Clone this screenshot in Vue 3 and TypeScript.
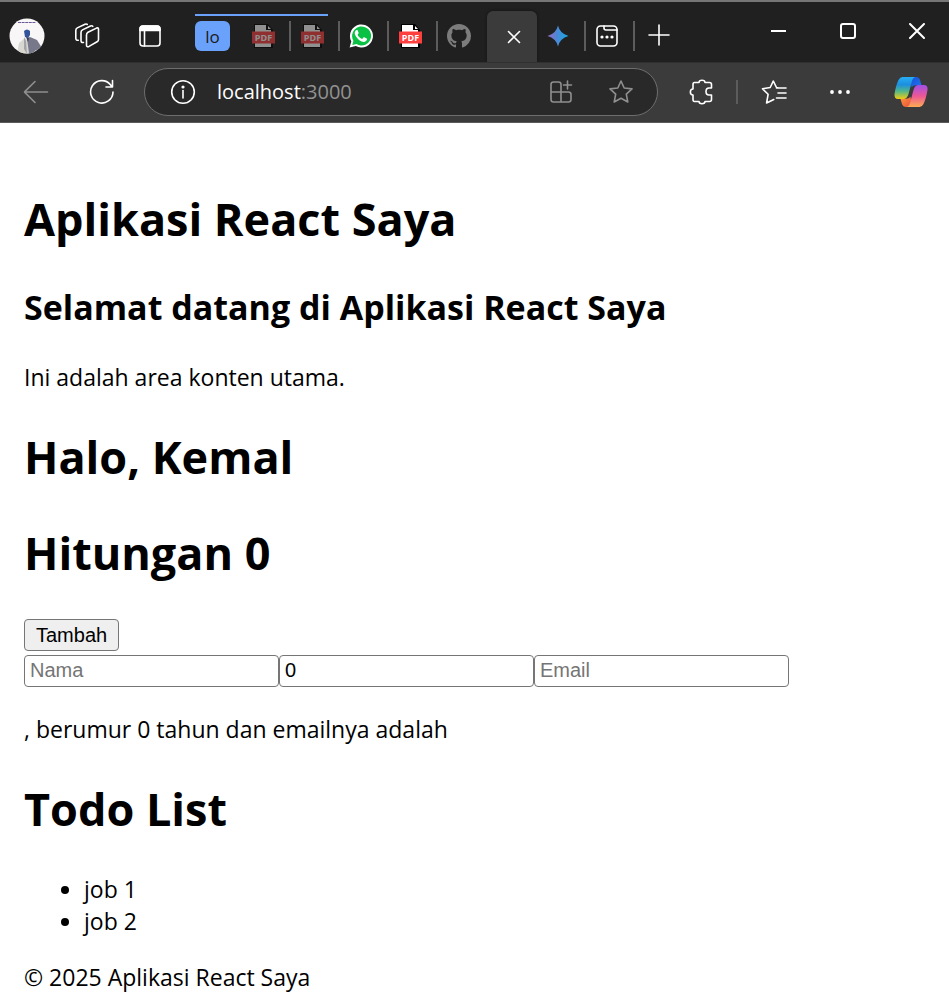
<script setup lang="ts">
import { ref } from 'vue'

const hitungan = ref(0)
const nama = ref('')
const umur = ref(0)
const email = ref('')
const alamat = ref('localhost:3000')
const jobs = ref<string[]>(['job 1', 'job 2'])
</script>

<template>
  <div class="window">
    <header class="tabstrip">
      <button class="cell profile" aria-label="Profile">
        <svg width="36" height="36" viewBox="0 0 36 36">
          <defs><clipPath id="face"><circle cx="18" cy="18" r="17.5" /></clipPath></defs>
          <g clip-path="url(#face)">
            <rect width="36" height="36" fill="#f8f6f7" />
            <path d="M9 4.500h18" stroke="#6a5a9c" stroke-width="1.200" stroke-dasharray="3 .6" />
            <path d="M8 36l2-11 6-5 3 3 1 13z" fill="#d9d7d0" />
            <path d="M18 20l3-1 7 3 5 8v3l-6-1-4 4h-3z" fill="#77788a" />
            <path d="M15 19l2 4 1 13-3-5z" fill="#a3a3aa" />
            <path d="M15 13q3-3 6 0v4l-2 3-3-1z" fill="#34539a" />
            <path d="M17 19l3 1-1 4z" fill="#3a3e58" />
          </g>
        </svg>
      </button>
      <button class="cell wide" aria-label="Workspaces">
        <svg class="ico" width="26" height="26" viewBox="0 0 26 26">
          <path d="M14 9.300l8.500-4.200q2-.8 2 1.200v10.200q0 1.500-1.400 2.300l-8.100 4.600q-2.500 1.100-2.500-1.200V12q0-1.800 1.500-2.700z" />
          <path d="M9.500 19.500q-2.500.4-2.500-1.800V9.500q0-1.800 1.500-2.600L16.500 3q1.700-.7 2.300.4" />
          <path d="M4.300 17.300q-2.500.2-2.500-2V7.500q0-1.800 1.500-2.600L11 1.200q1.500-.6 2.200.2" />
        </svg>
      </button>
      <button class="cell" aria-label="Tab actions">
        <svg class="ico" width="24" height="24" viewBox="0 0 24 24">
          <rect x="2" y="2" width="20" height="20" rx="3" />
          <path d="M2 6.500V5q0-3 3-3h14q3 0 3 3v1.500z" fill="#fff" /><path d="M6.500 7v15" />
        </svg>
      </button>
      <nav class="tabs" aria-label="Tabs">
        <div class="group">
          <button class="chip">lo</button>
          <button v-for="n in 2" :key="n" class="tab" aria-label="PDF">
            <svg class="dim" width="24" height="24" viewBox="0 0 24 24">
              <path d="M3 0h14l5 6v18H3z" fill="#000" /><path d="M4 1h11v5h5v17H4z" fill="#fff" /><path d="M17 2l3 3h-3z" fill="#fff" />
              <rect x="1" y="7.500" width="23" height="12" fill="#ff3e3e" />
              <text x="12.500" y="16.800" class="pdf">PDF</text>
            </svg>
          </button>
        </div>
        <button class="tab" aria-label="WhatsApp">
          <svg width="24" height="24" viewBox="0 0 24 24">
            <path d="M.6 23.600l1.700-6.200A11.500 11.500 0 1 1 6.800 22z" fill="#fff" />
            <path d="M3.300 20.900l1.100-4.100A9.500 9.500 0 1 1 7.500 20z" fill="#0ac143" />
            <path d="M8.800 6.700c-.3-.6-.6-.6-.9-.6-.6 0-1.100.2-1.500.8-1.500 1.900-.5 4 1 6 2 2.800 4.400 4.600 7.400 5 1.700 0 3-.9 3.300-2.800 0-.5-.1-.5-.4-.7l-2.500-1.200c-.3-.1-.6-.1-.8.2l-1 1.300c-.2.2-.4.3-.8.1-1.600-.7-3-1.900-4-3.700-.2-.3 0-.5.200-.7l.8-1.100c.1-.2.1-.4 0-.6z" fill="#fff" />
          </svg>
        </button>
        <button class="tab" aria-label="PDF">
          <svg width="24" height="24" viewBox="0 0 24 24">
            <path d="M3 0h14l5 6v18H3z" fill="#000" /><path d="M4 1h11v5h5v17H4z" fill="#fff" /><path d="M17 2l3 3h-3z" fill="#fff" />
            <rect x="1" y="7.500" width="23" height="12" fill="#ff3e3e" />
            <text x="12.500" y="16.800" class="pdf">PDF</text>
          </svg>
        </button>
        <button class="tab plain" aria-label="GitHub">
          <svg width="24" height="24" viewBox="0 0 16 16" fill="#7c7c7c">
            <path d="M8 0C3.580 0 0 3.580 0 8c0 3.540 2.290 6.530 5.470 7.590.4.070.55-.17.55-.38 0-.19-.01-.82-.01-1.490-2.010.37-2.530-.49-2.690-.94-.09-.23-.48-.94-.82-1.130-.28-.15-.68-.52-.01-.53.63-.01 1.080.58 1.230.82.72 1.210 1.870.87 2.330.66.070-.52.28-.87.51-1.070-1.780-.2-3.640-.89-3.640-3.950 0-.87.31-1.590.82-2.150-.08-.2-.36-1.020.08-2.120 0 0 .67-.21 2.200.82.64-.18 1.320-.27 2-.27s1.360.09 2 .27c1.530-1.040 2.200-.82 2.200-.82.44 1.100.16 1.920.08 2.120.51.56.82 1.270.82 2.150 0 3.070-1.870 3.750-3.650 3.950.29.25.54.73.54 1.480 0 1.070-.01 1.930-.01 2.200 0 .21.15.46.55.38A8.010 8.010 0 0 0 16 8c0-4.420-3.580-8-8-8z" />
          </svg>
        </button>
        <button class="active" aria-label="Close tab">
          <svg class="ico" width="14" height="14" viewBox="0 0 14 14"><path d="M1.500 1.500l11 11M12.500 1.500l-11 11" /></svg>
        </button>
        <button class="tab" aria-label="Gemini">
          <svg width="24" height="24" viewBox="0 0 24 24">
            <defs><linearGradient id="gem" x1="0" y1="0" x2="1" y2="0"><stop offset=".1" stop-color="#8a6fc4" /><stop offset=".45" stop-color="#4b88d8" /><stop offset=".8" stop-color="#25a0df" /></linearGradient></defs>
            <path d="M12 1.500q1.800 8 10.500 10.500Q13.800 14.500 12 22.500 10.200 14.500 1.500 12 10.200 9.500 12 1.500z" fill="url(#gem)" />
          </svg>
        </button>
        <button class="tab" aria-label="New tab page">
          <svg class="ico" width="24" height="24" viewBox="0 0 24 24">
            <rect x="2" y="2" width="20" height="20" rx="3.500" /><path d="M9 2v2q0 2 2 2h11" />
            <g fill="#fff" stroke="none"><circle cx="7" cy="13" r="1.600" /><circle cx="12" cy="13" r="1.600" /><circle cx="17" cy="13" r="1.600" /></g>
          </svg>
        </button>
        <button class="add" aria-label="New tab">
          <svg class="ico" width="22" height="22" viewBox="0 0 22 22"><path d="M11 1v20M1 11h20" /></svg>
        </button>
      </nav>
      <div class="controls">
        <button aria-label="Minimize"><svg width="16" height="16" viewBox="0 0 16 16"><path d="M0 8h15" stroke="#fff" stroke-width="2" /></svg></button>
        <button aria-label="Maximize"><svg class="ico" width="16" height="16" viewBox="0 0 16 16"><rect x="1" y="1" width="14" height="14" rx="2" /></svg></button>
        <button aria-label="Close"><svg class="ico" width="16" height="16" viewBox="0 0 16 16"><path d="M1 1l14 14M15 1L1 15" /></svg></button>
      </div>
    </header>

    <div class="toolbar">
      <button class="tool back" aria-label="Back">
        <svg class="ico grey" width="26" height="24" viewBox="0 0 26 24"><path d="M24.500 12H1.500M12 1.500L1.500 12 12 22.500" /></svg>
      </button>
      <button class="tool" aria-label="Refresh">
        <svg class="ico" width="26" height="26" viewBox="0 0 26 26"><path d="M24 13A11.200 11.200 0 1 1 21.500 5.800L23 8M23.500 1.500V8H17" /></svg>
      </button>
      <div class="address">
        <svg class="ico" width="26" height="26" viewBox="0 0 26 26"><circle cx="13" cy="13" r="11.300" /><path d="M13 11.500V19" /><circle cx="13" cy="8" r=".8" fill="#fff" /></svg>
        <label class="url"><span class="shown">localhost<span class="port">:3000</span></span><input v-model="alamat" class="urlfield" aria-label="Address" type="text" /></label>
        <button class="inner" aria-label="Apps">
          <svg class="ico grey" width="24" height="24" viewBox="0 0 24 24"><path d="M12 12V4.500Q12 2 9.500 2h-5Q2 2 2 4.500v15Q2 22 4.500 22h15q2.500 0 2.500-2.500v-5q0-2.500-2.500-2.500zM2 12h10v10M18.500 1v8M14.500 5h8" /></svg>
        </button>
        <button class="inner" aria-label="Favorite">
          <svg class="ico grey" width="26" height="26" viewBox="0 0 26 26"><path d="M13 2l3.200 7 7.800.9-5.700 5.300 1.500 7.800L13 19.200 6.200 23l1.500-7.800L2 9.900 9.800 9z" /></svg>
        </button>
      </div>
      <button class="tool" aria-label="Extensions">
        <svg class="ico" width="26" height="26" viewBox="0 0 26 26"><path d="M5.500 3.500H10C10 .5 16 .5 16 3.500h4.500q2 0 2 2V9h-2.500c-4 0-4 7 0 7h2.500v4.500q0 2-2 2H16C16 25.500 10 25.500 10 22.500H5.500q-1.500 0-1.500-2V16C.5 16 .5 10 4 10V5.500q0-2 1.500-2z" /></svg>
      </button>
      <span class="divider"></span>
      <button class="tool" aria-label="Favorites">
        <svg class="ico" width="26" height="26" viewBox="0 0 26 26"><path d="M17 8.700l-1.500-.2L12.300 2 9.200 8.500 1.500 9.800l5.600 5.500L5.600 24l7.200-3.500M15.500 9H25M17 14h8M15.500 19H25" /></svg>
      </button>
      <button class="tool" aria-label="More">
        <svg width="22" height="6" viewBox="0 0 22 6" fill="#fff"><circle cx="3" cy="3" r="1.900" /><circle cx="11" cy="3" r="1.900" /><circle cx="19" cy="3" r="1.900" /></svg>
      </button>
      <button class="tool copilot" aria-label="Copilot">
        <svg width="34" height="32" viewBox="0 0 34 32">
          <defs>
            <linearGradient id="ca" x1="0" y1="0" x2="0" y2="1"><stop offset="0" stop-color="#27aef3" /><stop offset=".35" stop-color="#1c8ee0" /><stop offset=".65" stop-color="#52b788" /><stop offset="1" stop-color="#f2cb13" /></linearGradient>
            <linearGradient id="cb" x1="0" y1="0" x2="0" y2="1"><stop offset="0" stop-color="#a24fe8" /><stop offset=".5" stop-color="#ed5795" /><stop offset="1" stop-color="#ffac52" /></linearGradient>
            <linearGradient id="cc" x1="0" y1="0" x2="1" y2="1"><stop offset="0" stop-color="#1650d8" /><stop offset="1" stop-color="#2375ef" /></linearGradient>
            <linearGradient id="cd" x1="0" y1="0" x2="1" y2="1"><stop offset="0" stop-color="#ff983a" /><stop offset="1" stop-color="#e84d3d" /></linearGradient>
          </defs>
          <path d="M16 1h6q3 0 4 3l1.500 5.200H22q-3 0-4.500 2z" fill="url(#cc)" />
          <path d="M18 31h-6q-3 0-4-3l-1.500-5.200H12q3 0 4.500-2z" fill="url(#cd)" />
          <path d="M8.500 1H22q-3 0-4 4l-3.500 13q-1.500 5-5 5H4q-4 0-3.500-5Q2 9 4.500 4 6 1 8.500 1z" fill="url(#ca)" />
          <path d="M25.500 31H12q3 0 4-4l3.500-13q1.500-5 5-5H30q4 0 3.500 5Q32 23 29.500 28 28 31 25.500 31z" fill="url(#cb)" />
        </svg>
      </button>
    </div>

    <main class="page">
      <h1>Aplikasi React Saya</h1>
      <h2>Selamat datang di Aplikasi React Saya</h2>
      <p>Ini adalah area konten utama.</p>
      <h1>Halo, Kemal</h1>
      <h1>Hitungan {{ hitungan }}</h1>
      <button class="tambah" @click="hitungan++">Tambah</button>
      <form class="fields" @submit.prevent>
        <input v-model="nama" type="text" placeholder="Nama" aria-label="Nama" />
        <input v-model="umur" type="number" aria-label="Umur" />
        <input v-model="email" type="email" placeholder="Email" aria-label="Email" />
      </form>
      <p>{{ nama }}, berumur {{ umur }} tahun dan emailnya adalah {{ email }}</p>
      <h1>Todo List</h1>
      <ul>
        <li v-for="job in jobs" :key="job">{{ job }}</li>
      </ul>
      <footer>© 2025 Aplikasi React Saya</footer>
    </main>
  </div>
</template>

<style>
body {
  margin: 0;
  background: #fff;
}
</style>

<style scoped>
.window {
  font-family: 'Open Sans', 'Noto Sans', sans-serif;
  color: #000;
}
.tabstrip button,
.toolbar button {
  display: flex;
  align-items: center;
  justify-content: center;
  flex: none;
  margin: 0;
  padding: 0;
  border: 0;
  background: none;
}
svg {
  display: block;
  flex: none;
}
.ico {
  fill: none;
  stroke: #fff;
  stroke-width: 1.6;
  stroke-linecap: round;
  stroke-linejoin: round;
}
.grey {
  stroke: #8f8f8f;
}
.tabstrip {
  display: flex;
  box-sizing: border-box;
  height: 62px;
  border-top: 2px solid #767676;
  background: #202020;
}
.tabstrip .cell {
  width: 60px;
  padding-top: 8px;
}
.tabstrip .profile {
  width: 54px;
}
.tabstrip .wide {
  width: 66px;
}
.tabs {
  display: flex;
  flex: 1;
  align-items: flex-end;
  padding-left: 15px;
}
.group {
  display: flex;
  align-items: flex-start;
  box-sizing: border-box;
  height: 48px;
  padding-top: 7px;
  background: linear-gradient(#6aa1fb, #6aa1fb) 0 0 / 133px 2px no-repeat;
}
.tabstrip .chip {
  width: 35px;
  height: 30px;
  margin: 0 12px 0 0;
  border-radius: 6px;
  background: #6aa1fb;
  color: #1b1b1b;
  font: 17px 'Open Sans', sans-serif;
}
.tabstrip .tab {
  box-sizing: border-box;
  width: 49px;
  height: 30px;
  margin-bottom: 11px;
  padding-right: 6px;
  border-right: 2px solid #5c5c5c;
}
.tabstrip .plain {
  border-color: transparent;
}
.dim {
  opacity: 0.5;
}
.pdf {
  fill: #fff;
  font: bold 9px 'Open Sans', sans-serif;
  text-anchor: middle;
}
.tabstrip .active {
  width: 50px;
  height: 51px;
  padding-left: 4px;
  border-radius: 6px 6px 0 0;
  background: #3b3b3b;
  box-shadow: 0 0 3px #111;
  clip-path: inset(-4px -4px 0 -4px);
}
.tabstrip .add {
  width: 48px;
  height: 30px;
  margin-bottom: 12px;
}
.controls {
  display: flex;
  align-items: flex-start;
}
.controls button {
  width: 69px;
  height: 58px;
  padding-left: 4px;
}
.controls .ico {
  stroke-width: 2;
}
.toolbar {
  display: flex;
  align-items: flex-start;
  box-sizing: border-box;
  height: 61px;
  padding-top: 5px;
  border-top: 1px solid #303030;
  border-bottom: 1px solid #5a5a5a;
  background: #3b3b3b;
}
.toolbar .tool {
  width: 66px;
  height: 48px;
}
.toolbar .back {
  margin-left: 3px;
}
.address {
  display: flex;
  flex: 1;
  align-items: center;
  box-sizing: border-box;
  height: 48px;
  margin: 0 11px 0 9px;
  padding: 0 6px 0 25px;
  border: 1px solid #6e6e6e;
  border-radius: 24px;
  background: #292929;
}
.url {
  display: grid;
  flex: 1;
  margin-left: 21px;
  color: #fff;
  font-size: 20px;
  line-height: 28px;
}
.shown,
.urlfield {
  grid-area: 1 / 1;
}
.port {
  color: #929292;
}
.urlfield {
  min-width: 0;
  padding: 0;
  border: 0;
  outline: 0;
  background: none;
  color: transparent;
  font: inherit;
}
.toolbar .inner {
  width: 60px;
  height: 44px;
}
.divider {
  width: 2px;
  height: 24px;
  margin: 12px 3px 0 1px;
  background: #5c5c5c;
}
.toolbar .copilot {
  width: 76px;
}
.page {
  padding: 64px 24px 14px;
  font-size: 23px;
  line-height: 32px;
}
h1 {
  margin: 0 0 32px;
  font-size: 45px;
  line-height: 64px;
}
h2 {
  margin: 0 0 30px;
  font-size: 34px;
  line-height: 48px;
}
p {
  margin: 0 0 32px;
}
.tambah {
  display: block;
  height: 32px;
  margin: 34px 0 4px;
  padding: 0 11px;
  border: 1px solid #767676;
  border-radius: 4px;
  background: #efefef;
  color: #000;
  font: 20px 'Liberation Sans', Arial, sans-serif;
}
.fields {
  display: flex;
  margin-bottom: 26px;
}
.fields input {
  box-sizing: border-box;
  flex: 0 1 255px;
  min-width: 0;
  height: 32px;
  margin: 0;
  padding: 0 5px 2px;
  border: 1px solid #767676;
  border-radius: 4px;
  background: #fff;
  color: #000;
  font: 20px 'Liberation Sans', Arial, sans-serif;
}
.fields input::placeholder {
  color: #757575;
}
ul {
  margin: 0 0 24px;
  padding-left: 60px;
}
</style>
